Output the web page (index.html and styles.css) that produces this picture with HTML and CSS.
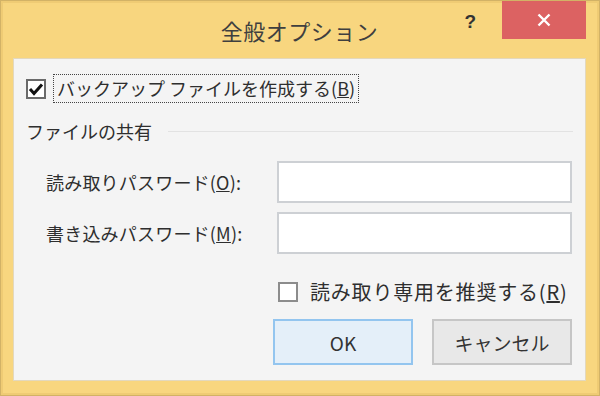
FILE: index.html
```html
<!DOCTYPE html>
<html lang="ja">
<head>
    <meta charset="UTF-8">
    <title>全般オプション</title>
    <link rel="stylesheet" href="styles.css">
</head>
<body>
    <div class="window">
        <div class="titlebar">
            <div></div>
            <div class="title">全般オプション</div>
            <div class="controls">
                <span class="help">?</span>
                <span class="close">
                    <svg width="16" height="16" viewBox="0 0 16 16">
                        <path d="M2.5 2.5 L13.5 13.5 M13.5 2.5 L2.5 13.5" stroke="#fff" stroke-width="2.4" fill="none"/>
                    </svg>
                </span>
            </div>
        </div>
        <div class="client">
            <div class="check-row">
                <span class="check-box">
                    <svg width="16" height="16" viewBox="0 0 16 16">
                        <path d="M2 8 L6 12.5 L14 3.5" stroke="#111" stroke-width="3" fill="none"/>
                    </svg>
                </span>
                <span class="check-label focus">バックアップ ファイルを作成する(<u>B</u>)</span>
            </div>
            <div class="group-head">
                <span>ファイルの共有</span>
                <span class="rule"></span>
            </div>
            <div class="pw-grid">
                <span class="pw-label">読み取りパスワード(<u>O</u>):</span>
                <input class="pw-input" type="password">
                <span class="pw-label">書き込みパスワード(<u>M</u>):</span>
                <input class="pw-input" type="password">
            </div>
            <div class="check-row readonly">
                <span class="check-box empty"></span>
                <span class="check-label">読み取り専用を推奨する(<u>R</u>)</span>
            </div>
            <div class="buttons">
                <button class="btn default">OK</button>
                <button class="btn">キャンセル</button>
            </div>
        </div>
    </div>
</body>
</html>
```

FILE: styles.css
```css
body {
    margin: 0;
    font-family: "Noto Sans CJK JP", "Noto Sans", sans-serif;
    color: #2e2e2e;
}
.window {
    width: 600px;
    height: 396px;
    box-sizing: border-box;
    background-color: #f8d67f;
    border: 1px solid #d2b266;
    box-shadow: inset 0 0 0 2px #efcb74;
    padding: 0 13px 0 12px;
}
.titlebar {
    height: 57px;
    display: grid;
    grid-template-columns: 1fr auto 1fr;
}
.title {
    font-size: 22px;
    color: #3f3f3f;
    padding-top: 13px;
    line-height: 32px;
    letter-spacing: 0.5px;
}
.controls {
    display: flex;
    justify-content: flex-end;
    align-items: flex-start;
}
.help {
    font-family: "Liberation Sans", Arial, sans-serif;
    font-weight: bold;
    font-size: 19px;
    color: #333;
    margin-top: 10px;
    margin-right: 26px;
}
.close {
    width: 84px;
    height: 38px;
    background-color: #dc6262;
    display: flex;
    align-items: center;
    justify-content: center;
}
.client {
    height: 323px;
    box-sizing: border-box;
    background-color: #f4f4f4;
    border: 1px solid #e3d8bd;
    padding: 15px 12px 0 12px;
}
.check-row {
    display: flex;
    align-items: center;
    height: 29px;
}
.check-box {
    width: 20px;
    height: 20px;
    box-sizing: border-box;
    border: 2px solid #6a6a6a;
    background-color: #fff;
    display: flex;
    align-items: center;
    justify-content: center;
    margin-right: 7px;
}
.check-box.empty {
    border-color: #8c8c8c;
}
.check-label {
    font-size: 18px;
    line-height: 27px;
    padding: 0 3px;
    border: 1px solid transparent;
}
.check-label.focus {
    border: 1px dotted #444;
}
.group-head {
    display: flex;
    align-items: center;
    margin-top: 16px;
    font-size: 18px;
    line-height: 24px;
}
.rule {
    flex: 1;
    height: 1px;
    background-color: #e2e2e2;
    margin-left: 16px;
}
.pw-grid {
    display: grid;
    grid-template-columns: 231px 295px;
    row-gap: 9px;
    margin-top: 18px;
    padding-left: 20px;
    align-items: center;
}
.pw-label {
    font-size: 18px;
    letter-spacing: 0.2px;
}
.pw-input {
    height: 42px;
    box-sizing: border-box;
    border: 2px solid #cdd0d4;
    background-color: #fff;
    margin: 0;
}
.check-row.readonly {
    margin-top: 23px;
    padding-left: 252px;
}
.readonly .check-label {
    font-size: 20px;
    letter-spacing: 0.8px;
    padding-left: 4px;
}
.buttons {
    display: flex;
    justify-content: flex-end;
    gap: 19px;
    margin-top: 13px;
    padding-right: 1px;
}
.btn {
    width: 140px;
    height: 46px;
    font-family: inherit;
    font-size: 19px;
    color: #333;
    background-color: #e8e8e8;
    border: 2px solid #c6c6c6;
}
.btn.default {
    background-color: #e4eff9;
    border-color: #93c5ef;
}
```
